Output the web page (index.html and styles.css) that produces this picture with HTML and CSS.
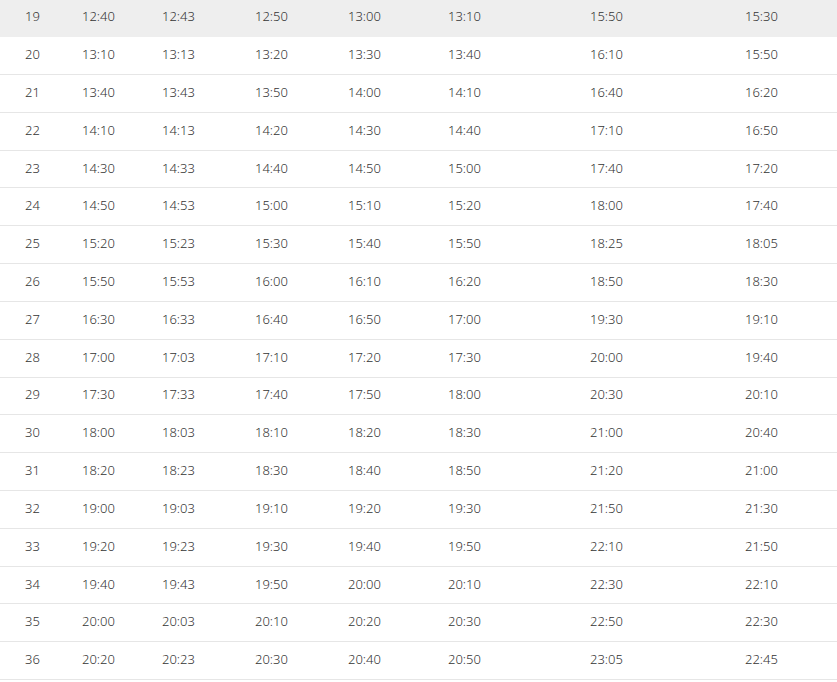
FILE: index.html
```html
<!DOCTYPE html>
<html lang="ko">
<head>
<meta charset="utf-8">
<title>시간표</title>
<link rel="stylesheet" href="styles.css">
</head>
<body>
<div class="table">
<div class="row active"><span>19</span><span>12:40</span><span>12:43</span><span>12:50</span><span>13:00</span><span>13:10</span><span>15:50</span><span>15:30</span></div>
<div class="row"><span>20</span><span>13:10</span><span>13:13</span><span>13:20</span><span>13:30</span><span>13:40</span><span>16:10</span><span>15:50</span></div>
<div class="row"><span>21</span><span>13:40</span><span>13:43</span><span>13:50</span><span>14:00</span><span>14:10</span><span>16:40</span><span>16:20</span></div>
<div class="row"><span>22</span><span>14:10</span><span>14:13</span><span>14:20</span><span>14:30</span><span>14:40</span><span>17:10</span><span>16:50</span></div>
<div class="row"><span>23</span><span>14:30</span><span>14:33</span><span>14:40</span><span>14:50</span><span>15:00</span><span>17:40</span><span>17:20</span></div>
<div class="row"><span>24</span><span>14:50</span><span>14:53</span><span>15:00</span><span>15:10</span><span>15:20</span><span>18:00</span><span>17:40</span></div>
<div class="row"><span>25</span><span>15:20</span><span>15:23</span><span>15:30</span><span>15:40</span><span>15:50</span><span>18:25</span><span>18:05</span></div>
<div class="row"><span>26</span><span>15:50</span><span>15:53</span><span>16:00</span><span>16:10</span><span>16:20</span><span>18:50</span><span>18:30</span></div>
<div class="row"><span>27</span><span>16:30</span><span>16:33</span><span>16:40</span><span>16:50</span><span>17:00</span><span>19:30</span><span>19:10</span></div>
<div class="row"><span>28</span><span>17:00</span><span>17:03</span><span>17:10</span><span>17:20</span><span>17:30</span><span>20:00</span><span>19:40</span></div>
<div class="row"><span>29</span><span>17:30</span><span>17:33</span><span>17:40</span><span>17:50</span><span>18:00</span><span>20:30</span><span>20:10</span></div>
<div class="row"><span>30</span><span>18:00</span><span>18:03</span><span>18:10</span><span>18:20</span><span>18:30</span><span>21:00</span><span>20:40</span></div>
<div class="row"><span>31</span><span>18:20</span><span>18:23</span><span>18:30</span><span>18:40</span><span>18:50</span><span>21:20</span><span>21:00</span></div>
<div class="row"><span>32</span><span>19:00</span><span>19:03</span><span>19:10</span><span>19:20</span><span>19:30</span><span>21:50</span><span>21:30</span></div>
<div class="row"><span>33</span><span>19:20</span><span>19:23</span><span>19:30</span><span>19:40</span><span>19:50</span><span>22:10</span><span>21:50</span></div>
<div class="row"><span>34</span><span>19:40</span><span>19:43</span><span>19:50</span><span>20:00</span><span>20:10</span><span>22:30</span><span>22:10</span></div>
<div class="row"><span>35</span><span>20:00</span><span>20:03</span><span>20:10</span><span>20:20</span><span>20:30</span><span>22:50</span><span>22:30</span></div>
<div class="row"><span>36</span><span>20:20</span><span>20:23</span><span>20:30</span><span>20:40</span><span>20:50</span><span>23:05</span><span>22:45</span></div>
</div>
</body>
</html>
```

FILE: styles.css
```css
html, body {
  margin: 0;
  padding: 0;
  background: #ffffff;
}

.table {
  margin-top: -0.6px;
  font-family: "Noto Sans", "Open Sans", sans-serif;
  font-size: 13px;
  font-weight: 300;
  color: #333333;
}

.row {
  box-sizing: border-box;
  display: grid;
  grid-template-columns: 57px 80px 93px 93px 100px 142px 155px 1fr;
  padding-left: 25px;
  padding-bottom: 3px;
  height: 37.82px;
  align-items: center;
  border-bottom: 1px solid #e6e6e6;
}

.row.active {
  background: #eeeeee;
  border-bottom-color: #eeeeee;
}

.row span {
  white-space: nowrap;
}
```
